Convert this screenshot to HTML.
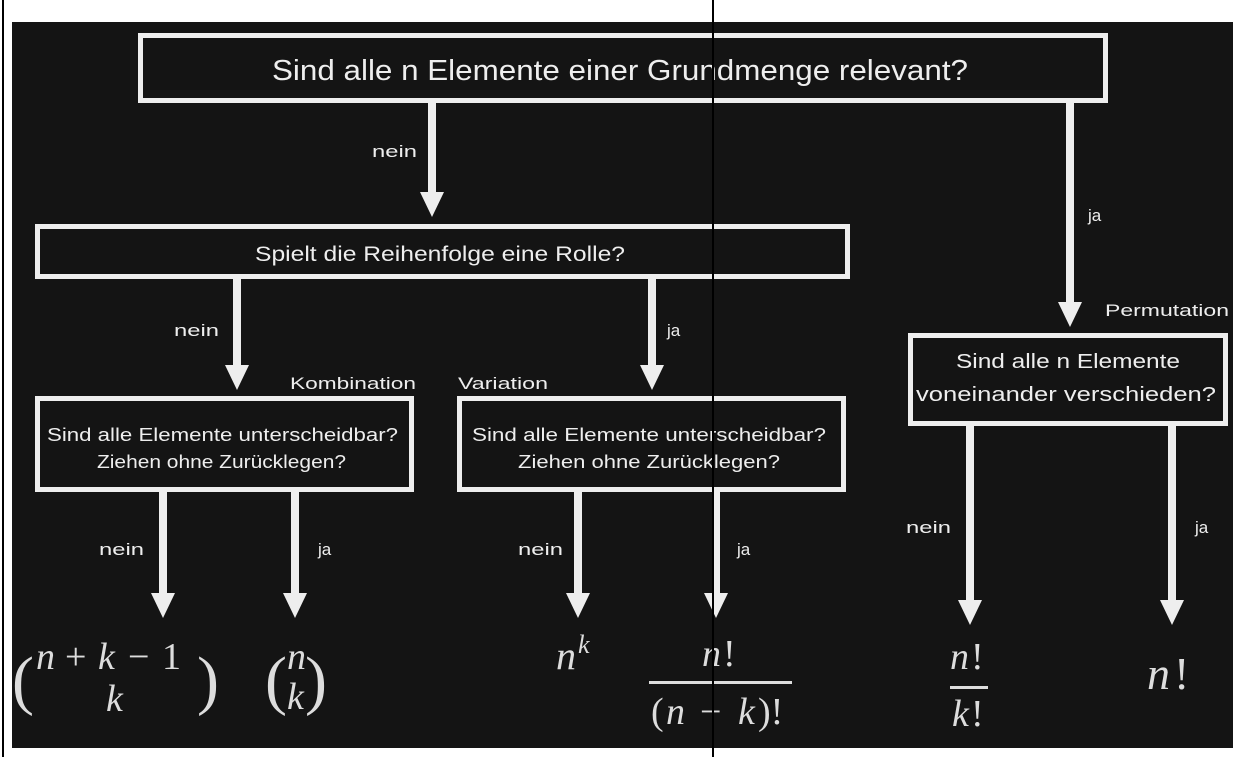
<!DOCTYPE html>
<html><head><meta charset="utf-8"><style>
html,body{margin:0;padding:0;background:#fff;width:1241px;height:757px;overflow:hidden}
svg{display:block}
text{font-family:"Liberation Sans",sans-serif;fill:#eee}
.m{font-family:"Liberation Serif",serif;font-style:italic;fill:#ddd}
.u{font-family:"Liberation Serif",serif;fill:#ddd}
</style></head><body>
<svg width="1241" height="757" viewBox="0 0 1241 757">
<rect x="0" y="0" width="1241" height="757" fill="#fff"/>
<rect x="2" y="0" width="2" height="757" fill="#000"/>
<rect x="12" y="22" width="1221" height="726" fill="#141414"/>
<g fill="none" stroke="#eee" stroke-width="5">
<rect x="140.5" y="35.5" width="965" height="65"/>
<rect x="37.5" y="226.5" width="810" height="50"/>
<rect x="37.5" y="398.5" width="374" height="91"/>
<rect x="459.5" y="398.5" width="384" height="91"/>
<rect x="910.5" y="335.5" width="315" height="88"/>
</g>
<g fill="#eee">
<rect x="428" y="103" width="8" height="90"/><polygon points="420,192 444,192 432,217"/>
<rect x="1066" y="103" width="8" height="200"/><polygon points="1058,302 1082,302 1070,327"/>
<rect x="233" y="279" width="8" height="87"/><polygon points="225,365 249,365 237,390"/>
<rect x="648" y="279" width="8" height="87"/><polygon points="640,365 664,365 652,390"/>
<rect x="159" y="491" width="8" height="103"/><polygon points="151,593 175,593 163,618"/>
<rect x="291" y="491" width="8" height="103"/><polygon points="283,593 307,593 295,618"/>
<rect x="574" y="491" width="8" height="103"/><polygon points="566,593 590,593 578,618"/>
<rect x="712" y="491" width="8" height="103"/><polygon points="704,593 728,593 716,618"/>
<rect x="966" y="424" width="8" height="177"/><polygon points="958,600 982,600 970,625"/>
<rect x="1168" y="424" width="8" height="177"/><polygon points="1160,600 1184,600 1172,625"/>
</g>
<g lengthAdjust="spacingAndGlyphs">
<text x="272" y="80" font-size="29" textLength="696" lengthAdjust="spacingAndGlyphs">Sind alle n Elemente einer Grundmenge relevant?</text>
<text x="255" y="261" font-size="21" textLength="370" lengthAdjust="spacingAndGlyphs">Spielt die Reihenfolge eine Rolle?</text>
<text x="47" y="441" font-size="18" textLength="351" lengthAdjust="spacingAndGlyphs">Sind alle Elemente unterscheidbar?</text>
<text x="97" y="468" font-size="18" textLength="249" lengthAdjust="spacingAndGlyphs">Ziehen ohne Zurücklegen?</text>
<text x="472" y="441" font-size="18" textLength="354" lengthAdjust="spacingAndGlyphs">Sind alle Elemente unterscheidbar?</text>
<text x="518" y="468" font-size="18" textLength="262" lengthAdjust="spacingAndGlyphs">Ziehen ohne Zurücklegen?</text>
<text x="956" y="368" font-size="20" textLength="224" lengthAdjust="spacingAndGlyphs">Sind alle n Elemente</text>
<text x="916" y="401" font-size="20" textLength="300" lengthAdjust="spacingAndGlyphs">voneinander verschieden?</text>
</g>
<g font-size="17">
<text x="372" y="157" textLength="45" lengthAdjust="spacingAndGlyphs">nein</text>
<text x="1088" y="221">ja</text>
<text x="174" y="336" textLength="45" lengthAdjust="spacingAndGlyphs">nein</text>
<text x="667" y="336">ja</text>
<text x="290" y="389" textLength="126" lengthAdjust="spacingAndGlyphs">Kombination</text>
<text x="458" y="389" textLength="90" lengthAdjust="spacingAndGlyphs">Variation</text>
<text x="1105" y="316" textLength="124" lengthAdjust="spacingAndGlyphs">Permutation</text>
<text x="99" y="555" textLength="45" lengthAdjust="spacingAndGlyphs">nein</text>
<text x="318" y="555">ja</text>
<text x="518" y="555" textLength="45" lengthAdjust="spacingAndGlyphs">nein</text>
<text x="737" y="555">ja</text>
<text x="906" y="533" textLength="45" lengthAdjust="spacingAndGlyphs">nein</text>
<text x="1195" y="533">ja</text>
</g>
<text class="u" x="12" y="702" font-size="66">(</text>
<text class="m" x="36" y="669" font-size="38">n</text>
<text class="u" x="65" y="669" font-size="38">+</text>
<text class="m" x="98" y="669" font-size="38">k</text>
<text class="u" x="128" y="669" font-size="38">−</text>
<text class="u" x="162" y="669" font-size="38">1</text>
<text class="m" x="106" y="711" font-size="38">k</text>
<text class="u" x="197" y="702" font-size="66">)</text>
<text class="u" x="265" y="702" font-size="66">(</text>
<text class="m" x="287" y="669" font-size="38">n</text>
<text class="m" x="287" y="709" font-size="38">k</text>
<text class="u" x="305" y="702" font-size="66">)</text>
<text class="m" x="556" y="669" font-size="40">n</text>
<text class="m" x="578" y="653" font-size="26">k</text>
<text class="m" x="702" y="666" font-size="38">n</text><text class="u" x="723" y="666" font-size="38">!</text>
<rect x="649" y="681" width="143" height="3" fill="#ddd"/>
<text class="u" x="651" y="724" font-size="38">(</text><text class="m" x="666" y="724" font-size="38">n</text><text class="u" x="700" y="724" font-size="38">−</text><text class="m" x="738" y="724" font-size="38">k</text><text class="u" x="758" y="724" font-size="38">)!</text>
<text class="m" x="950" y="669" font-size="38">n</text><text class="u" x="971" y="669" font-size="38">!</text>
<rect x="950" y="686" width="38" height="3" fill="#ddd"/>
<text class="m" x="952" y="726" font-size="38">k</text><text class="u" x="971" y="726" font-size="38">!</text>
<text class="m" x="1147" y="689" font-size="46">n</text><text class="u" x="1174" y="689" font-size="46">!</text>
<rect x="712" y="0" width="2" height="757" fill="#000"/>
</svg>
</body></html>
